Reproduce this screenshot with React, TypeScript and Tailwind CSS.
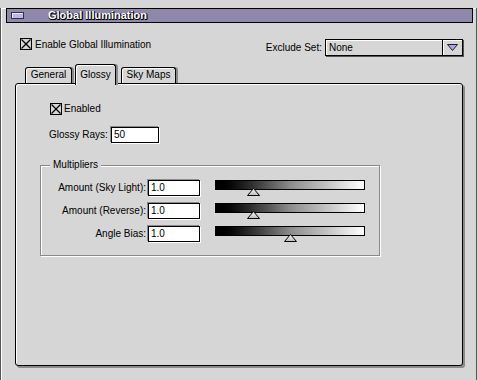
import React from 'react';

const Check: React.FC = () => (
  <svg width="12" height="12" viewBox="0 0 12 12" shapeRendering="crispEdges" className="shrink-0">
    <rect x="0.5" y="0.5" width="11" height="11" fill="#d6d6d6" stroke="#000" />
    <line x1="1.5" y1="1.5" x2="10.5" y2="10.5" stroke="#000" strokeWidth="1.3" shapeRendering="auto" />
    <line x1="10.5" y1="1.5" x2="1.5" y2="10.5" stroke="#000" strokeWidth="1.3" shapeRendering="auto" />
  </svg>
);

const Field: React.FC<{ value: string; width: string }> = ({ value, width }) => (
  <div
    className={`${width} h-[16px] bg-white border border-black shadow-[-1px_-1px_0_#8a8a8a,1px_1px_0_#fff] pl-[2px] flex items-center leading-[12px]`}
  >
    {value}
  </div>
);

const Thumb: React.FC = () => (
  <svg width="13" height="8" viewBox="0 0 13 8">
    <defs>
      <linearGradient id="thumb" x1="0" y1="0" x2="0" y2="1">
        <stop offset="0" stopColor="#fff" />
        <stop offset="1" stopColor="#b8b8b8" />
      </linearGradient>
    </defs>
    <polygon points="6.5,0.5 12.5,7.5 0.5,7.5" fill="url(#thumb)" stroke="#000" strokeWidth="1" />
  </svg>
);

interface Row {
  label: string;
  value: string;
  thumb: string;
}

const rows: Row[] = [
  { label: 'Amount (Sky Light):', value: '1.0', thumb: 'left-[32px]' },
  { label: 'Amount (Reverse):', value: '1.0', thumb: 'left-[32px]' },
  { label: 'Angle Bias:', value: '1.0', thumb: 'left-[69px]' },
];

export default function App() {
  return (
    <div className="w-[478px] h-[380px] bg-[#d6d6d6] overflow-hidden text-[10px] text-black font-['Liberation_Sans',Arial,sans-serif]">
      <div className="w-[477px] h-[379px] border-l border-l-[#555] border-r border-r-[#555] border-b border-b-[#8a8a8a] shadow-[inset_1px_1px_0_#fff]">
        {/* title bar */}
        <div className="mt-[8px] ml-[5px] w-[467px] h-[15px] border border-black bg-[#8f88ab] flex items-center">
          <div className="ml-[4px] w-[13px] h-[7px] border border-[#333] bg-[#b9b6f2] shadow-[inset_1px_1px_0_#e8e8ff]" />
          <span className="ml-[24px] text-[11px] font-bold text-white leading-[13px] [text-shadow:1px_1px_0_#000,1px_0_0_#000,0_1px_0_#000]">
            Global Illumination
          </span>
        </div>

        {/* options row */}
        <div className="mt-[14px] h-[19px] flex justify-between items-start pl-[19px] pr-[13px]">
          <div className="flex items-center gap-[3px] h-[13px]">
            <Check />
            <span className="leading-[12px] mt-[2px]">Enable Global Illumination</span>
          </div>
          <div className="flex items-center gap-[3px] mt-[2px]">
            <span className="leading-[12px]">Exclude Set:</span>
            <div className="w-[138px] h-[17px] border border-black bg-[#d6d6d6] shadow-[1px_1px_0_#555,inset_1px_1px_0_#fff] flex items-stretch">
              <span className="flex-1 pl-[3px] flex items-center leading-[12px]">None</span>
              <div className="w-[20px] border-l border-l-black shadow-[inset_1px_1px_0_#fff] flex items-center justify-center">
                <svg width="11" height="7" viewBox="0 0 11 7">
                  <polygon points="0.5,0.5 10.5,0.5 5.5,6.5" fill="#a9a2ee" stroke="#222" strokeWidth="1" />
                </svg>
              </div>
            </div>
          </div>
        </div>

        {/* tabs */}
        <div className="mt-[8px] h-[19px] flex items-end pl-[24px]">
          <div className="w-[47px] h-[16px] border border-black border-b-0 rounded-t-[3px] bg-[#d6d6d6] shadow-[inset_1px_1px_0_#fff,2px_0_0_#8a8a8a] flex justify-center pt-[1px] leading-[12px]">
            General
          </div>
          <div className="relative z-10 ml-[3px] mb-[-2px] w-[41px] h-[21px] border border-black border-b-0 rounded-t-[3px] bg-[#d6d6d6] shadow-[inset_1px_1px_0_#fff,2px_0_0_#8a8a8a] flex justify-center pt-[4px] leading-[12px]">
            Glossy
          </div>
          <div className="ml-[5px] w-[55px] h-[16px] border border-black border-b-0 rounded-t-[3px] bg-[#d6d6d6] shadow-[inset_1px_1px_0_#fff,2px_0_0_#8a8a8a] flex justify-center pt-[1px] leading-[12px]">
            Sky Maps
          </div>
        </div>

        {/* panel */}
        <div className="ml-[14px] w-[448px] h-[283px] border border-black rounded-[3px] bg-[#d6d6d6] shadow-[inset_1px_1px_0_#fff,2px_2px_0_#8a8a8a] flex flex-col items-start">
          <div className="ml-[34px] mt-[19px] flex items-center gap-[2px] h-[12px]">
            <Check />
            <span className="leading-[12px]">Enabled</span>
          </div>

          <div className="ml-[33px] mt-[12px] flex items-center h-[16px]">
            <span className="leading-[12px]">Glossy Rays:</span>
            <div className="ml-[3px]">
              <Field value="50" width="w-[48px]" />
            </div>
          </div>

          <div className="relative ml-[24px] mt-[22px] w-[340px] h-[91px] border border-[#8a8a8a] shadow-[inset_1px_1px_0_#fff,1px_1px_0_#fff] pt-[14px] flex flex-col gap-[7px]">
            <span className="absolute left-[9px] top-[-7px] px-[3px] bg-[#d6d6d6] leading-[12px]">Multipliers</span>
            {rows.map((row) => (
              <div key={row.label} className="flex items-start h-[16px]">
                <span className="w-[105px] text-right leading-[16px]">{row.label}</span>
                <div className="ml-[2px]">
                  <Field value={row.value} width="w-[52px]" />
                </div>
                <div className="relative ml-[15px] w-[150px] h-[16px]">
                  <div className="h-[10px] border border-black bg-gradient-to-r from-black via-[#8c8c8c] to-white" />
                  <div className={`absolute top-[8px] ${row.thumb} flex`}>
                    <Thumb />
                  </div>
                </div>
              </div>
            ))}
          </div>
        </div>
      </div>
    </div>
  );
}
